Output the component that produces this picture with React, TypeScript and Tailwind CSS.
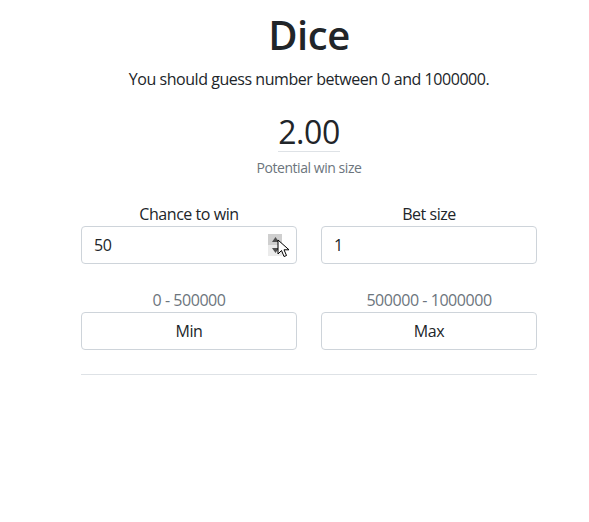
import * as React from "react";

const font = {
  fontFamily: '"Open Sans", "Noto Sans", sans-serif',
  letterSpacing: "-0.45px",
};

function Spinner() {
  return (
    <div className="pointer-events-none absolute left-[187px] top-[8px] h-[22px] w-[14px]">
      <div className="flex h-[11px] items-center justify-center bg-[#cfcfcf]">
        <svg width="7" height="5" viewBox="0 0 7 5">
          <path d="M0 5 L3.5 0 L7 5 Z" fill="#505050" />
        </svg>
      </div>
      <div className="flex h-[11px] items-center justify-center bg-[#ebebeb]">
        <svg width="7" height="5" viewBox="0 0 7 5">
          <path d="M0 0 L3.5 5 L7 0 Z" fill="#505050" />
        </svg>
      </div>
      <svg
        className="absolute left-[9px] top-[5px]"
        width="13"
        height="20"
        viewBox="0 0 13 20"
      >
        <path
          d="M1 1 L1 15 L4.5 11.5 L7 17.5 L9.5 16.5 L7 10.8 L12 10.8 Z"
          fill="#ffffff"
          stroke="#000000"
          strokeWidth="1"
          strokeLinejoin="round"
        />
      </svg>
    </div>
  );
}

export default function App() {
  return (
    <div className="min-h-[522px] bg-white text-[#212529]" style={font}>
      <div className="ml-[81px] w-[456px] pt-[11px]">
        <h1 className="text-center text-[40px] font-semibold leading-[1.2]">
          Dice
        </h1>
        <p className="mt-[8px] text-center text-[16px] leading-[24px]">
          You should guess number between 0 and 1000000.
        </p>
        <div className="mt-[22px] flex flex-col items-center">
          <span className="border-b border-[#dee2e6] text-[32px] leading-[38px]">
            2.00
          </span>
          <span className="mt-[5px] text-[14px] leading-[21px] text-[#6c757d]">
            Potential win size
          </span>
        </div>

        <div className="mt-[24px] grid grid-cols-2 gap-x-[24px]">
          <div className="flex flex-col">
            <label className="text-center text-[16px] leading-[24px]">
              Chance to win
            </label>
            <div className="relative">
              <div className="h-[38px] rounded-[4px] border border-[#ced4da] px-[12px] text-[16px] leading-[36px]">
                50
              </div>
              <Spinner />
            </div>
          </div>
          <div className="flex flex-col">
            <label className="text-center text-[16px] leading-[24px]">
              Bet size
            </label>
            <div className="h-[38px] rounded-[4px] border border-[#ced4da] px-[12px] text-[16px] leading-[36px]">
              1
            </div>
          </div>
        </div>

        <div className="mt-[24px] grid grid-cols-2 gap-x-[24px]">
          <div className="flex flex-col">
            <span className="text-center text-[16px] leading-[24px] text-[#6c757d]">
              0 - 500000
            </span>
            <button className="h-[38px] rounded-[4px] border border-[#ced4da] bg-white text-[16px] text-[#212529]">
              Min
            </button>
          </div>
          <div className="flex flex-col">
            <span className="text-center text-[16px] leading-[24px] text-[#6c757d]">
              500000 - 1000000
            </span>
            <button className="h-[38px] rounded-[4px] border border-[#ced4da] bg-white text-[16px] text-[#212529]">
              Max
            </button>
          </div>
        </div>

        <hr className="mt-[24px] border-0 border-t border-[#dee2e6]" />
      </div>
    </div>
  );
}
